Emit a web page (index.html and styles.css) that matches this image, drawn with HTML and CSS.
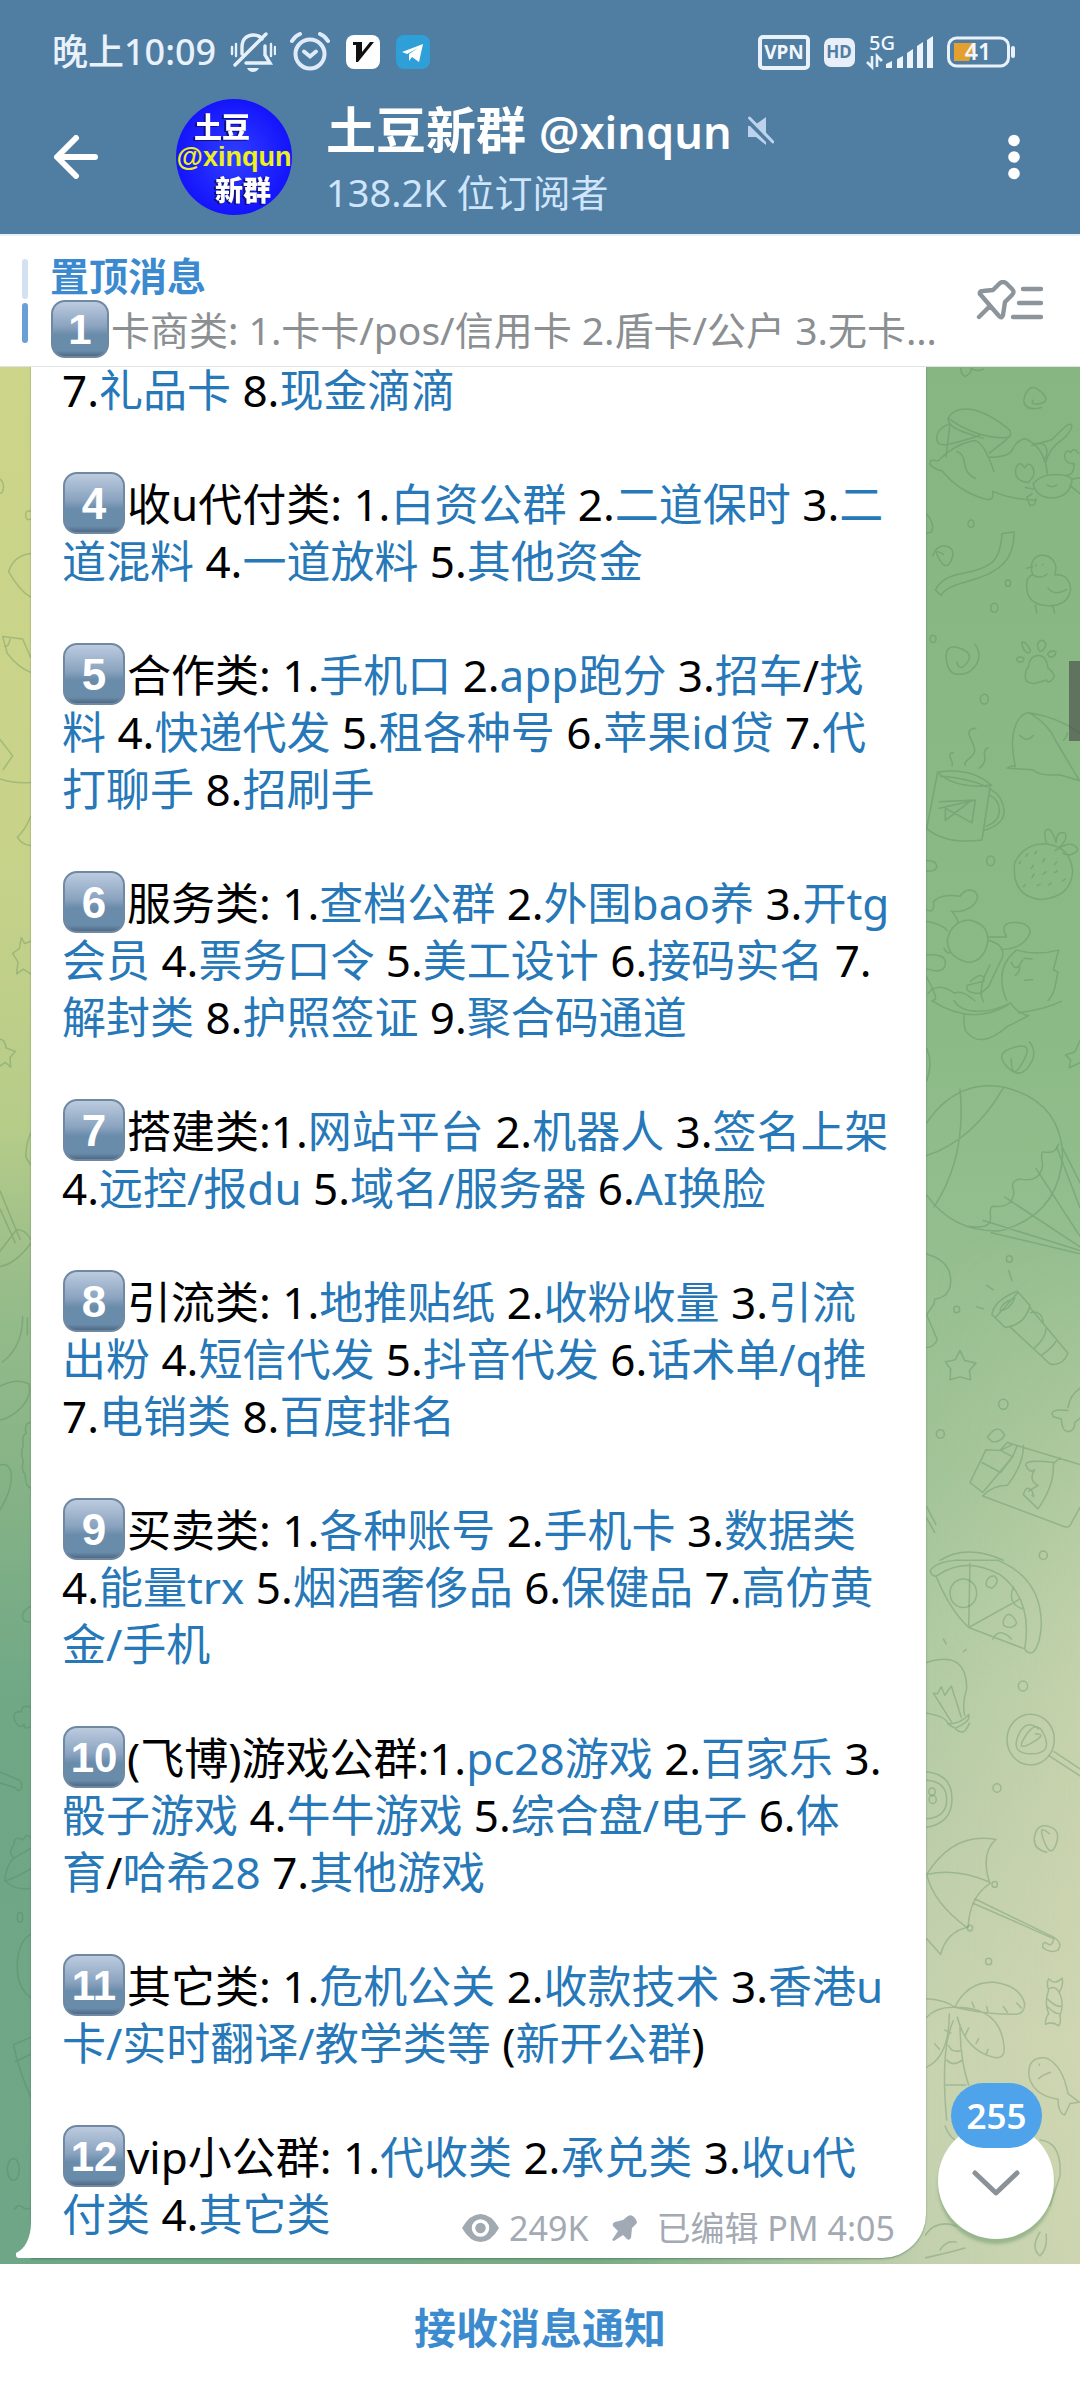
FILE: index.html
```html
<!DOCTYPE html>
<html lang="zh-CN">
<head>
<meta charset="utf-8">
<meta name="viewport" content="width=device-width, initial-scale=1">
<title>土豆新群 @xinqun</title>
<link rel="stylesheet" href="styles.css">
</head>
<body>
<header class="top">
  <div class="status">
    <span class="clock">晚上10:09</span>
    <svg class="s-bell" width="46" height="42" viewBox="0 0 46 42" fill="none" stroke="#e6f0fb" stroke-width="3.4" stroke-linecap="round"><path d="M12 23V16C12 8 17 4 23 4C27 4 30 5 32 8M35 15V24L40 32H16M5 34L36 3"/><path d="M2 16v7M6 13v12M41 13v12M45 16v7" stroke-width="2.4"/><path d="M17 37h12q-2 4-6 4t-6-4z" fill="#e6f0fb" stroke="none"/></svg>
    <svg class="s-alarm" width="40" height="40" viewBox="0 0 40 40" fill="none" stroke="#dfeafb" stroke-width="4" stroke-linecap="round"><circle cx="20" cy="22" r="14.5"/><path d="M14 19.5l6 5 6-5"/><path d="M2 9q3-5 8-7M38 9q-3-5-8-7"/></svg>
    <svg class="s-app" width="34" height="34" viewBox="0 0 34 34"><rect width="34" height="34" rx="8" fill="#fff"/><path d="M7 7h9v10L24 7h4L12 27h-2V10H7z" fill="#111"/></svg>
    <svg class="s-app" width="34" height="34" viewBox="0 0 34 34"><rect width="34" height="34" rx="8" fill="#2f9fd8"/><path d="M6 17L27 9 23 27l-7-5-3 4v-7l9-6-11 6z" fill="#fff"/></svg>
    <svg class="s-right" width="270" height="42" viewBox="0 0 270 42">
      <rect x="14" y="6" width="48" height="31" rx="3" fill="none" stroke="#e9f1fb" stroke-width="4"/>
      <text x="38" y="28" class="t-vpn" text-anchor="middle">VPN</text>
      <rect x="78" y="7" width="31" height="29" rx="7" fill="#e9eff8"/>
      <text x="93" y="27" class="t-hd" text-anchor="middle">HD</text>
      <text x="123" y="19" class="t-5g">5G</text>
      <path d="M126 25v11l-5-5M131 36V25l5 5" stroke="#e6f0fb" stroke-width="2.6" fill="none"/>
      <path d="M140 33l6-3v7h-6zM151 28l6-3v12h-6zM161 22l6-4v19h-6zM171 15l6-4v26h-6zM181 9l6-4v32h-6z" fill="#edf3fb"/>
      <rect x="202.500" y="7" width="60" height="28" rx="8" fill="none" stroke="#e9f1fb" stroke-width="3"/>
      <path d="M208 12h22l-7 18H208z" fill="#e3a02f"/>
      <path d="M267 17v8" stroke="#e9f1fb" stroke-width="4" stroke-linecap="round"/>
      <text x="232" y="29" class="t-bat" text-anchor="middle">41</text>
    </svg>
  </div>
  <div class="bar">
    <button class="icon-btn" aria-label="返回"><svg width="44" height="44" viewBox="0 0 44 44" fill="none" stroke="#fff" stroke-width="6" stroke-linecap="round" stroke-linejoin="round"><path d="M41 22H4M22 3L3 22l19 19"/></svg></button>
    <svg class="avatar" width="116" height="116" viewBox="0 0 116 116" role="img" aria-label="头像">
      <defs><radialGradient id="av"><stop offset="0" stop-color="#3040ff"/><stop offset="1" stop-color="#1414fb"/></radialGradient></defs>
      <circle cx="58" cy="58" r="58" fill="url(#av)"/>
      <text x="18" y="39" class="av-cn">土豆</text>
      <text x="58" y="67" class="av-id" text-anchor="middle">@xinqun</text>
      <text x="39" y="102" class="av-cn">新群</text>
    </svg>
    <div class="who">
      <h1><span>土豆新群 <span class="handle">@xinqun</span></span>
        <svg width="26" height="30" viewBox="0 0 26 30"><path d="M7 9L18 1V18zM0 10h2L18 26v3L8 21H0z" fill="#bdd2ec"/><path d="M1.500 2L25 26" stroke="#bdd2ec" stroke-width="3" stroke-linecap="round"/></svg></h1>
      <p>138.2K 位订阅者</p>
    </div>
    <button class="icon-btn" aria-label="更多"><svg width="12" height="46" viewBox="0 0 12 46" fill="#fff"><circle cx="6" cy="6.500" r="5.800"/><circle cx="6" cy="23" r="5.800"/><circle cx="6" cy="39.500" r="5.800"/></svg></button>
  </div>
</header>

<section class="pinned">
  <div class="marks"><i></i><i class="on"></i></div>
  <div class="pin-text">
    <h2>置顶消息</h2>
    <p><span class="key small">1</span>卡商类: 1.卡卡/pos/信用卡 2.盾卡/公户 3.无卡…</p>
  </div>
  <button class="icon-btn" aria-label="置顶列表"><svg width="68" height="42" viewBox="0 0 68 42" fill="none" stroke="#8b959b" stroke-width="4.400" stroke-linecap="round" stroke-linejoin="round"><path d="M4 14Q3 11 7 11L17 10 24 3Q27 1 30 3L36 9Q39 12 36 15L29 22 27 35Q26 39 23 36L4 14M14 26L3 37M47 9h18M43 23h22M37 37h28"/></svg></button>
</section>

<main class="chat">
  <svg class="wall left" width="32" height="1898" viewBox="0 366 32 1898" preserveAspectRatio="none">
    <defs><linearGradient id="lg" x1="0" y1="0" x2="0" y2="1"><stop offset="0" stop-color="#ccd58a"/><stop offset=".25" stop-color="#c8d389"/><stop offset=".4" stop-color="#b6cc89"/><stop offset=".49" stop-color="#96bc8a"/><stop offset=".6" stop-color="#84b286"/><stop offset=".7" stop-color="#70a886"/><stop offset="1" stop-color="#6ea687"/></linearGradient></defs>
    <rect y="366" width="32" height="1898" fill="url(#lg)"/>
    <g class="doodle" transform="translate(0 360) scale(.3333 .606)"><path d="M0 195q12 5 10 15t-10 8M92 248q-16-2-15 7t15 6M92 318Q40 322 26 348Q60 380 92 390M8 455l14 28q34 24 70 31M8 455l60 4 24 30M30 459q-4 14-16 12M0 625l38 27-28 22M0 690q46 8 92 6M92 752q-16 22-40 34q12 12 40 14M92 958l-18 4-10-10-6 18-20 8 16 14-4 20 20-8 22 8M0 1120q14 0 18 14l28 6-16 10 2 16-16-8-16 6M92 1275q-16 20-14 40l14 12M0 1370l60 80M0 1400l46 56M0 1470l50-36q26 0 42 16M0 1495q46-4 92-38"/></g>
    <g class="doodle" transform="translate(0 1310) scale(.3333 .606)"><path d="M68 10q0 50-60 75M82 12v28M0 125q50-14 86-4q10 20-20 38t-66 22M92 185q-20 0-14 18q-14 4-8 20q-10 12 0 26q-8 14 6 22q0 20 16 22M0 255q34-4 34 20t-34 54M92 488q-26 8-24 18t24 8M92 655q-28-6-28 8-28-4-20 14 14 16 28 6 0 10 20 4M0 762l60 14q10 8 2 14t-16-2L0 780M92 870q-14-8-22 4-28-8-28 8-20 12 0 22M14 942q4-26 28-38l50-16M14 942q30-4 78-20M20 944q30 14 72 10M92 1030q-38 12-40 50t40 54M92 1298Q60 1260 40 1212L92 1200M46 1240l46-12M44 1484q10-10 22-4t26 2"/><circle cx="60" cy="1002" r="8"/><circle cx="40" cy="1418" r="18"/></g>
  </svg>
  <svg class="wall right" width="155" height="1898" viewBox="925 366 155 1898" preserveAspectRatio="none">
    <defs>
      <linearGradient id="rg" x1="0" y1="0" x2="0" y2="1"><stop offset="0" stop-color="#88b683"/><stop offset=".34" stop-color="#8bba86"/><stop offset=".46" stop-color="#94be8e"/><stop offset=".58" stop-color="#a2c497"/><stop offset=".66" stop-color="#aecaa1"/><stop offset=".78" stop-color="#bdceab"/><stop offset=".88" stop-color="#c8d3b0"/><stop offset="1" stop-color="#c3d1ae"/></linearGradient>
      <linearGradient id="rh" x1="0" x2="1" y1="0" y2="0"><stop offset="0" stop-color="#d6d9b2" stop-opacity="0"/><stop offset="1" stop-color="#d6d9b2" stop-opacity=".5"/></linearGradient>
      <linearGradient id="fade" x1="0" y1="0" x2="0" y2="1"><stop offset=".45" stop-color="#000"/><stop offset=".7" stop-color="#fff"/></linearGradient>
      <mask id="m"><rect x="925" y="366" width="155" height="1898" fill="url(#fade)"/></mask>
    </defs>
    <rect x="925" y="366" width="155" height="1898" fill="url(#rg)"/>
    <rect x="925" y="366" width="155" height="1898" fill="url(#rh)" mask="url(#m)"/>
    <g class="doodle" transform="translate(900 360) scale(.3333 .4082)"><path d="M182 18q4 24 18 18t14-18q14 10 36 2M424 114q-32 8-46-4t2-34 44 0-2 28-24-8M144 140Q165 112 215 119T330 170Q336 190 318 188Q230 190 144 140zM144 140q0 14 20 24t86 25M330 182q-2 6-14 6M148 154q-38 12-38 34t36 16 94-22M150 155L138 235M90 253q-2-14 24-8Q160 205 222 195q28 0 60 76M90 253q10 12 36 16 50 50 124 68 24 6 28-4v-14q50 20 130 22M170 222q20 4 24 30t32 36M268 226l52-34M268 236q60 0 70-20t36-26q60 20 68 86M395 207l60-14 46-36q16-6 14 6-10 20-38 36t-40 50M400 204q30-8 38 8t-6 32M384 298q-44-4-36-36 10-20 26 0 10-16 22-4 16 20-12 40zM400 300q20-20 60-22 54 0 56 16-8 40-60 42-50-2-56-36zM442 304q14 8 28 0M500 280q24 0 22-30M524 252q-32 0-30-22 6-16 18-6 10-14 24 2M514 290l26-4M510 305l30 20M400 314l-24-4M396 326l-16 8 10 20 14-2 4-16M80 375q26 26 14 44l-14 3M98 478q14-30 42-24t14 34-36-2 12-12M306 423l36-4q2 48-30 76t-106 44-82 36l-18-14q20-32 80-40t88-26 32-72zM398 524q-14-40 24-48 38-2 46 30-2 18-4 18 42-4 48 34-6 42-66 42-66-2-66-48-2-22 18-28 22 12 44-2M380 508l18-4M444 556q20 22 56 4M406 598l4 20M458 598l6 20M408 500v2M428 498v2M225 694q22 26 4 50t-52 24-38-38 40-26 22 36-30-2M376 776q0-22 10-26 0-26 28-28 24-2 30 30 20 14 18 22-14 20-24 8-34 10-42 8-20-2-20-14zM365 690q10-4 22 12 10 14-4 14-14-6-18-26zM414 692q12-16 24 2-6 18-18 18-10-8-6-20zM444 716q14-10 24-2-2 10-16 12-10-2-8-10zM350 730q10-10 22 0-2 10-14 8-10-4-8-8zM322 998q10-8 24-4-22-80 12-118 14-14 30-14 60 30 80 70l70 96-60-14q-60 4-80-12zM388 862q90 12 152 50M360 918q20 18 40 0M490 930q10-8 12-18M228 900q-30 2-18 22t14 30-16 22-12 16M160 960q-16 0-8 14t4 18M264 948q-14 6-10 22t-16 28M112 1008q100-14 162 32-106 10-162-32zM122 1018q80 4 140 26M112 1012L80 1146q60 40 166 28l24-130M272 1050q36 16 40 50t-58 50M268 1064q30 10 30 38t-40 38M118 1080l108-4-10 56-80-36v30l76-48M226 1076L118 1096M80 1224q30 0 30 14t-30 12M344 1230q30-50 96-46 70 6 78 66-4 64-96 70-88-8-78-90zM440 1184q-14-40 8-36 14 10 20 32 4-32 28-22 8 14-20 36M466 1200q50-30 68-2-20 20-46 8M378 1214l6-6M404 1208l6-6M358 1232l4-6M394 1244l6-8M428 1228l6-8M464 1234l6-6M396 1266l6-8M430 1258l8-6M464 1254l8-4M370 1288l6-4M412 1286l8-4M446 1284l8-4M488 1274l8-4M80 1346q26 8 20-20 20-22 80-14 18-22 44-12 20 16-8 36-30 18-62 12 20 18 20 28M80 1374q40 4 62 22M142 1420q10-46 64-50 58 8 58 50-10 52-60 54-62-12-62-54zM132 1440q10 14 20 10M264 1412q40 0 56 0-24-34 20-36 52 0 50 26-20 40-86 40M264 1420q50 10 44 40l-44 76M80 1456q60-4 56 22t-56 12M320 1568q-40-80 30-124 60 14 126 0l-16 48 14 6-10 40q-8 20-20 30M334 1474q10 20 24 8 4 14-12 24M358 1482l10-14M372 1464l24 2M374 1518l24-2M80 1510q40 60 20 56M84 1550q30-30 80 0 20-10 60 18M212 1520q40-28 40 0l-50 10q-10 20 40 20l20-14M270 1480q-40 60-20 90"/><circle cx="213" cy="399" r="9"/><circle cx="324" cy="544" r="8"/><circle cx="283" cy="605" r="11"/><circle cx="99" cy="681" r="9"/><circle cx="253" cy="829" r="12"/><circle cx="272" cy="1225" r="12"/></g>
    <g class="doodle" transform="translate(900 1000) scale(.3333 .3571)"><path d="M95 0q120 72 230 12M162 0q20 30 70 30t100-24q20 30 54 36-40 20-64 30-80 66-124 14-8-12-6-50M356 34q80-10 128-32M388 115q26 30 2 64t-50 20-34-36 44-34 18 44-34-10M540 112l-16 32-28 8 16 14-4 22 32-14M80 134q20 40 0 90M80 342Q170 220 310 242Q480 280 488 430Q480 600 300 645Q160 650 80 545M180 248q20 190-78 330M310 244Q220 390 80 434M204 632q70 10 68-24-4-30 6-32 60 6 64-40-14-34 20-36 60 10 66-40-8-40 4-36 34 6 44-22M250 616L540 700M274 650l270 60M314 550l226 140M408 470l132 190M470 410l70 170M486 410l54 100M80 710q70 20 72 70t-48 56l-2 14-22 30 32 70q-10 20-32 22M326 756l10 28M260 798l20 12M230 858l20 5M276 880q4-40 76-66l38 40q-14 54-74 62zM300 868q4-22 44-34-16 34-44 34zM352 820l-64 66M330 914L450 1018q36 8 54-30L390 860M392 874q30-8 38 26M402 974q34-26 36-54M424 994q34-22 44-40M180 980l14 28 34 8-20 20 4 26-32-8-30 8 2-30-16-20 30-6zM504 1140q6-36 36-54M504 1148q-60-6-44 18l24 6q2 34 20 36 22-4 20-26l16-12M262 1224q30-44 52-6-14 20-36 18zM210 1350l48-92 42 2 22-22 218 62M246 1294l56 28 36-44-36-18M302 1260l34-16M210 1350l38 28 90-100 14-32M248 1388q30-30 74-30 50-60 48-112M248 1388l240 84q20 8 26-8l26-44M480 1280l-20 18q4 60-46 126l-44-40q10-30 26-10 10 22 0 12M462 1294q-90-10-84 8 10 24 26 12-20 30 10 44l-28 16M80 1418l28 50M80 1450l24 40M120 1568q80-46 190 0"/><circle cx="328" cy="724" r="9"/><circle cx="170" cy="865" r="9"/><circle cx="310" cy="1131" r="14"/><circle cx="121" cy="1214" r="12"/><circle cx="430" cy="1554" r="12"/></g>
    <g class="doodle" transform="translate(900 1560) scale(.3333 .3571)"><path d="M164 0q-60 6-74 30 10 24 30 8Q200-10 300 40Q400 110 374 248M164 0h130q130 50 130 180-4 60-26 78-16 4-24-10Q240 200 206 188Q150 140 108 44M210 8l-4 180 154-80M278 220q20-34 56 0M340 74q-20 50 30 62M258 66q4-24 26-22 18 14-8 34-18-4-18-12zM310 170q10-28 26-14 28 24-4 32-26 0-22-18zM130 220l8 14M190 256l8-6M80 286Q200 250 200 360q-14 40-6 74M80 428q60 10 64 30M144 458q40 0 62-26 8 20-40 38-14-6-22-12zM166 472q26 24 42-16M154 452L100 372l12 2 12-20 10 24 20-26 30 88M448 548l92 56M462 536l78 48M416 472q-40-30-62 20t40 50 40-50-56-2 16 22 12-26M80 592q76 8 76 76t-76 80M80 616q60 4 60 54t-60 54M440 818q-44-10-36-46t44-26 20 50-36-10 16-20M80 880Q160 760 288 782Q240 820 270 906Q210 940 204 1028Q140 1040 122 1104L80 1060M80 880q90-20 190 22M80 880q20 80 120 148M224 948l220 100q50 20 30 44-24 10-46-8 0-20 14-10t20-14L218 960M164 1252q40-74 120-70 76 10 90 60 0 30-30 30-90 0-180-20Q300 1250 312 1360q6 40-32 32-84-20-108-112M80 1228q60 4 84 24Q110 1250 80 1280M148 1270q0 120-68 150M160 1290q-40 80-20 278M180 1300q0 100 26 170M216 1238l6 14M260 1250l4 16M310 1250l12 16M350 1240l14 14M206 1310l-10 20M236 1340l-8 14M264 1370l-6 16M104 1354l14 16M134 1316l18 8M146 1360q10 20 34 14M140 1400q20 20 46 0M138 1470h60M446 1172q20 20 40-2 6 20-8 40 16 30 2 66 4 20-4 28-20-14-40-4 0-20 10-30-14-30 0-66-8-20 0-32zM448 1200q20-10 30 12M444 1230q20 20 40 20M442 1250q20 20 36 20M388 1450q-10-60 50-56 50 20 66 100l34 24-28 4-16 32q-20-6-20-44-70-10-86-60zM416 1452q14-12 36-18M418 1412v2"/><circle cx="190" cy="92" r="40"/><circle cx="369" cy="352" r="14"/><circle cx="392" cy="502" r="71"/><circle cx="96" cy="648" r="10"/><circle cx="98" cy="670" r="11"/><circle cx="291" cy="638" r="12"/><circle cx="266" cy="1124" r="9"/><circle cx="284" cy="908" r="8"/><circle cx="210" cy="1030" r="8"/></g>
    <g class="doodle"><path d="M945 2126q4 10 10 14M1040 2140q22 2 20 36l-10 30M1040 2232q-10 16 0 24 8-8 6-22M922 2240q12-22 34-14M905 2262q40-8 60-14M940 2250q6-10 16-8"/></g>
  </svg>

  <article class="bubble">
    <p>7.<a href="#">礼品卡</a> 8.<a href="#">现金滴滴</a></p>
    <p><span class="key">4</span>收u代付类: 1.<a href="#">白资公群</a> 2.<a href="#">二道保时</a> 3.<a href="#">二<br>道混料</a> 4.<a href="#">一道放料</a> 5.<a href="#">其他资金</a></p>
    <p><span class="key">5</span>合作类: 1.<a href="#">手机口</a> 2.<a href="#">app跑分</a> 3.<a href="#">招车</a>/<a href="#">找<br>料</a> 4.<a href="#">快递代发</a> 5.<a href="#">租各种号</a> 6.<a href="#">苹果id贷</a> 7.<a href="#">代<br>打聊手</a> 8.<a href="#">招刷手</a></p>
    <p><span class="key">6</span>服务类: 1.<a href="#">查档公群</a> 2.<a href="#">外围bao养</a> 3.<a href="#">开tg<br>会员</a> 4.<a href="#">票务口令</a> 5.<a href="#">美工设计</a> 6.<a href="#">接码实名</a> 7.<br><a href="#">解封类</a> 8.<a href="#">护照签证</a> 9.<a href="#">聚合码通道</a></p>
    <p><span class="key">7</span>搭建类:1.<a href="#">网站平台</a> 2.<a href="#">机器人</a> 3.<a href="#">签名上架</a><br>4.<a href="#">远控/报du</a> 5.<a href="#">域名/服务器</a> 6.<a href="#">AI换脸</a></p>
    <p><span class="key">8</span>引流类: 1.<a href="#">地推贴纸</a> 2.<a href="#">收粉收量</a> 3.<a href="#">引流<br>出粉</a> 4.<a href="#">短信代发</a> 5.<a href="#">抖音代发</a> 6.<a href="#">话术单/q推</a><br>7.<a href="#">电销类</a> 8.<a href="#">百度排名</a></p>
    <p><span class="key">9</span>买卖类: 1.<a href="#">各种账号</a> 2.<a href="#">手机卡</a> 3.<a href="#">数据类</a><br>4.<a href="#">能量trx</a> 5.<a href="#">烟酒奢侈品</a> 6.<a href="#">保健品</a> 7.<a href="#">高仿黄<br>金/手机</a></p>
    <p><span class="key two">10</span>(飞博)游戏公群:1.<a href="#">pc28游戏</a> 2.<a href="#">百家乐</a> 3.<br><a href="#">骰子游戏</a> 4.<a href="#">牛牛游戏</a> 5.<a href="#">综合盘/电子</a> 6.<a href="#">体<br>育</a>/<a href="#">哈希28</a> 7.<a href="#">其他游戏</a></p>
    <p><span class="key two">11</span>其它类: 1.<a href="#">危机公关</a> 2.<a href="#">收款技术</a> 3.<a href="#">香港u<br>卡/实时翻译/教学类等</a> (<a href="#">新开公群</a>)</p>
    <p><span class="key two">12</span>vip小公群: 1.<a href="#">代收类</a> 2.<a href="#">承兑类</a> 3.<a href="#">收u代<br>付类</a> 4.<a href="#">其它类</a>
      <span class="meta">
        <svg width="37" height="28" viewBox="0 0 37 28"><path d="M0 14Q8 0 18.500 0T37 14Q29 28 18.500 28T0 14z" fill="#a1a9b1"/><circle cx="18.500" cy="14" r="7" fill="#a1a9b1" stroke="#fff" stroke-width="3.500"/></svg>
        <span class="views">249K</span>
        <svg class="pin" width="26" height="26" viewBox="0 0 26 26"><path d="M11 5l5-4q3-2 6 1t3 6l-5 5-1 10q-2 3-4 1l-4-4-9 6-2-1 6-9-5-5q-1-3 2-4z" fill="#a1a9b5"/></svg>
        <span>已编辑 PM 4:05</span>
      </span></p>
    <svg class="tail" width="16" height="36" viewBox="0 0 16 36"><path d="M15 0C15 16 9 27 0 31v2q0 3 3 3H16V0z" fill="#fff"/></svg>
  </article>

  <div class="thumb"></div>
  <button class="down" aria-label="转到底部"><span class="count">255</span><svg width="50" height="28" viewBox="0 0 50 28" fill="none" stroke="#8a9197" stroke-width="5" stroke-linecap="round" stroke-linejoin="round"><path d="M4 4l21 20L46 4"/></svg></button>
</main>

<footer class="foot"><button>接收消息通知</button></footer>
</body>
</html>
```

FILE: styles.css
```css
* { box-sizing: border-box; }
body {
  margin: 0;
  height: 100vh;
  display: flex;
  flex-direction: column;
  font-family: "Noto Sans", "Noto Sans CJK SC", sans-serif;
  background: #fff;
  color: #000;
}
h1, h2, p { margin: 0; }
svg { display: block; flex: none; }
button { font: inherit; border: 0; padding: 0; background: none; }
a { color: #2678b8; text-decoration: none; }

/* header */
.top { background: #507da2; color: #fff; }
.status { display: flex; align-items: center; height: 80px; padding: 24px 64px 0 52px; color: #e9f1fb; }
.clock { font-size: 36px; line-height: 56px; font-weight: 500; }
.s-bell { margin-left: 14px; }
.s-alarm { margin: 0 16px 0 14px; }
.s-app { margin-right: 16px; }
.s-right { margin-left: auto; }
.t-vpn, .t-hd, .t-5g, .t-bat { font-family: "Noto Sans", sans-serif; font-weight: 700; fill: #f2f7fd; }
.t-vpn { font-size: 19px; }
.t-hd { font-size: 17px; fill: #507da2; }
.t-5g { font-size: 20px; font-weight: 500; }
.t-bat { font-size: 23px; font-weight: 600; }

.bar { display: flex; align-items: center; height: 154px; padding: 0 60px 0 54px; }
.avatar { margin: 0 34px 0 78px; }
.av-cn { font: 900 28px "Noto Sans CJK SC", sans-serif; fill: #fff; filter: drop-shadow(-2px 1px 0 #10107a); }
.av-id { font: 700 27px "Liberation Sans", sans-serif; fill: #eef01e; }
.who { flex: 1; min-width: 0; display: flex; flex-direction: column; gap: 4px; padding-top: 4px; }
.who h1 { display: flex; align-items: center; gap: 16px; font-size: 50px; line-height: 60px; font-weight: 600; white-space: nowrap; }
.handle { font-size: 45px; }
.who p { font-size: 38px; line-height: 52px; color: #cfe5fb; }

/* pinned message */
.pinned { display: flex; align-items: center; height: 132px; padding: 0 36px 0 22px; border-top: 2px solid #e8f1fb; background: #fff; }
.marks { display: flex; flex-direction: column; gap: 4px; }
.marks i { width: 6px; height: 40px; border-radius: 3px; background: #d3e1f0; }
.marks .on { background: #6a9fd6; }
.pin-text { flex: 1; min-width: 0; margin: 0 20px 0 22px; padding-top: 3px; font-size: 39px; line-height: 54px; white-space: nowrap; }
.pin-text h2 { font-size: 39px; font-weight: 600; color: #3b8ad0; }
.pin-text p { color: #8b8f92; }

.key {
  display: inline-block;
  overflow: hidden;
  width: 62px;
  height: 62px;
  margin: -5px 2px -5px 1px;
  vertical-align: -8px;
  border-radius: 14px;
  border: 2px solid #7089a3;
  background: linear-gradient(#bccbdf, #8aa3bf 45%, #6a8cab 60%, #6a8cab 90%, #4f6a86);
  color: #fff;
  font-family: "Liberation Sans", sans-serif;
  font-size: 44px;
  line-height: 60px;
  font-weight: 700;
  text-align: center;
}
.key.two { font-size: 42px; }
.key.small { width: 58px; height: 58px; line-height: 56px; font-size: 42px; }

/* chat */
.chat {
  position: relative;
  flex: 1;
  min-height: 0;
  overflow: hidden;
  display: flex;
  flex-direction: column;
  justify-content: flex-end;
  padding: 0 154px 6px 31px;
  border-top: 1px solid #dfe3e3;
  background: linear-gradient(90deg, #6ea687, #78ac85 55%, #c3d1ae 86%);
}
.wall { position: absolute; top: 0; height: 100%; }
.wall.left { left: 0; }
.wall.right { right: 0; }
.doodle { fill: none; stroke: #4a7d52; stroke-opacity: .3; stroke-width: 1.500; stroke-linecap: round; stroke-linejoin: round; }
.doodle * { vector-effect: non-scaling-stroke; }

.bubble {
  position: relative;
  flex: none;
  display: flex;
  flex-direction: column;
  gap: 57px;
  padding: 40px 31px 15px;
  border-radius: 44px 44px 44px 0;
  background: #fff;
  box-shadow: 0 1px 2px #35604580;
  font-size: 44px;
  line-height: 57px;
}
.tail { position: absolute; left: -15px; bottom: 0; }
.meta { float: right; display: flex; align-items: center; margin-top: 18px; margin-bottom: -18px; font-size: 34px; line-height: 48px; color: #a3aab3; }
.views { margin: 0 24px 0 10px; }
.pin { margin-right: 18px; }

.thumb { position: absolute; right: 0; top: 294px; width: 11px; height: 80px; background: #4449; }
.down {
  position: absolute;
  right: 26px;
  bottom: 25px;
  width: 116px;
  height: 116px;
  padding-top: 4px;
  border-radius: 58px;
  background: #fff;
  box-shadow: 0 5px 3px #6b9a6c80;
  display: grid;
  place-items: center;
}
.count {
  position: absolute;
  left: 13px;
  top: -40px;
  width: 91px;
  border-radius: 33px;
  background: #4ea3ea;
  color: #fff;
  font-size: 35px;
  line-height: 65px;
  font-weight: 600;
  text-align: center;
}

/* footer */
.foot { height: 136px; padding-top: 34px; display: flex; justify-content: center; align-items: flex-start; background: #fff; }
.foot button { font-size: 42px; line-height: 60px; font-weight: 600; color: #3d8bcf; }
```
